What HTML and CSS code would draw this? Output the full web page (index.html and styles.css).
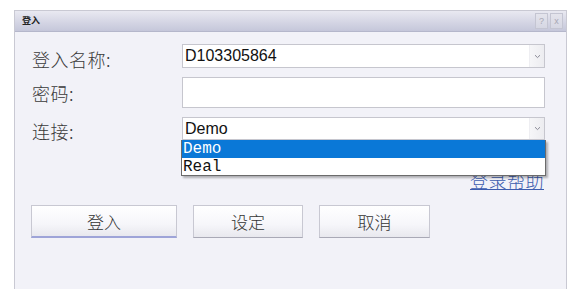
FILE: index.html
```html
<!DOCTYPE html>
<html>
<head>
<meta charset="utf-8">
<link rel="stylesheet" href="styles.css">
</head>
<body>
<div class="window">
  <div class="titlebar">
    <span class="title">登入</span>
    <div class="tbtns"><span class="tbtn">?</span><span class="tbtn">x</span></div>
  </div>
  <div class="content">
    <div class="form">
      <div class="label l1">登入名称:</div>
      <div class="field combo f1"><span class="val">D103305864</span><span class="arrow"><svg width="7" height="5" viewBox="0 0 7 5"><path d="M1 1.2 L3.5 3.6 L6 1.2" fill="none" stroke="#8a8a96" stroke-width="1"/></svg></span></div>
      <div class="label l2">密码:</div>
      <div class="field f2"></div>
      <div class="label l3">连接:</div>
      <div class="selwrap">
        <div class="field combo f3"><span class="val">Demo</span><span class="arrow"><svg width="7" height="5" viewBox="0 0 7 5"><path d="M1 1.2 L3.5 3.6 L6 1.2" fill="none" stroke="#8a8a96" stroke-width="1"/></svg></span></div>
        <div class="list">
          <div class="opt sel">Demo</div>
          <div class="opt">Real</div>
        </div>
      </div>
    </div>
    <div class="linkrow"><a class="help">登录帮助</a></div>
    <div class="buttons">
      <div class="btn default b1">登入</div>
      <div class="btn b2">设定</div>
      <div class="btn b3">取消</div>
    </div>
  </div>
</div>
</body>
</html>
```
FILE: styles.css
```css
html, body { margin: 0; padding: 0; background: #ffffff; }
body { width: 585px; height: 289px; overflow: hidden; font-family: "Noto Sans CJK SC", sans-serif; }
.window {
  margin: 10px 0 0 14px;
  width: 551px;
  height: 278px;
  border: 1px solid #c9c9d3;
  background: #f2f2f8;
  box-sizing: content-box;
}
.titlebar {
  height: 20px;
  background: linear-gradient(#e9e9f1, #d3d4e3 60%, #c5c7da);
  border-bottom: 1px solid #b5b7cb;
  display: flex;
  align-items: center;
  justify-content: space-between;
  padding: 0 3px 0 7px;
}
.title { font-size: 9px; font-weight: bold; color: #222; line-height: 20px; }
.tbtns { display: flex; gap: 2px; }
.tbtn {
  width: 11px; height: 14px;
  border: 1px solid #c4c5d2;
  background: linear-gradient(#e4e4ec, #d6d7e3);
  color: #a8a8b4;
  font-size: 9px;
  font-family: "Liberation Sans", sans-serif;
  line-height: 14px;
  text-align: center;
}
.content { padding: 12px 0 0 17px; }
.form {
  display: grid;
  grid-template-columns: 150px 363px;
  grid-template-rows: 24px 31px 23px;
  row-gap: 9px;
  align-items: center;
}
.label {
  font-size: 18px;
  font-weight: 300;
  color: #3a3a3a;
  line-height: 24px;
  letter-spacing: 0.5px;
}
.l1 { margin-top: 6px; }
.l3 { margin-top: 4px; }
.field {
  background: #fff;
  border: 1px solid #c6c6ce;
  box-sizing: border-box;
  height: 100%;
}
.combo { display: flex; align-items: center; justify-content: space-between; }
.val {
  font-family: "Liberation Sans", Arial, sans-serif;
  font-size: 16px;
  color: #111;
  padding-left: 2px;
}
.arrow {
  width: 14px;
  align-self: stretch;
  display: flex;
  align-items: center;
  justify-content: center;
  background: linear-gradient(90deg, #f6f6f8, #ececf0);
  border-left: 1px solid #eeeef2;
}
.selwrap { position: relative; height: 100%; }
.list {
  position: absolute;
  left: -1px; top: 23px;
  width: 363px;
  background: #fff;
  border: 1px solid #6b6b6b;
  border-top: none;
  box-shadow: 2px 2px 2px rgba(0,0,0,0.28);
  z-index: 2;
}
.opt {
  font-family: "Liberation Mono", monospace;
  font-size: 16px;
  line-height: 18px;
  height: 17px;
  color: #111;
  padding-left: 1px;
}
.opt.sel { background: #0a78d7; color: #fff; height: 18px; }
.linkrow {
  position: relative;
  z-index: 1;
  display: flex;
  justify-content: flex-end;
  width: 512px;
  margin-top: 28px;
}
.help {
  font-size: 18px;
  font-weight: 300;
  color: #3d5cae;
  text-decoration: underline;
  line-height: 24px;
  letter-spacing: 0.5px;
}
.buttons {
  display: flex;
  gap: 16px;
  margin-top: 13px;
}
.btn {
  height: 33px;
  box-sizing: border-box;
  border: 1px solid #c8c8d2;
  border-bottom-color: #a9a9b6;
  background: linear-gradient(#ffffff, #f6f6fa 60%, #e8e8ee);
  font-size: 17px;
  font-weight: 300;
  color: #333;
  display: flex;
  align-items: center;
  justify-content: center;
}
.btn.default { border-bottom: 2px solid #9ea4d8; }
.b1 { width: 146px; margin-left: -1px; }
.b2 { width: 110px; }
.b3 { width: 111px; }
```
